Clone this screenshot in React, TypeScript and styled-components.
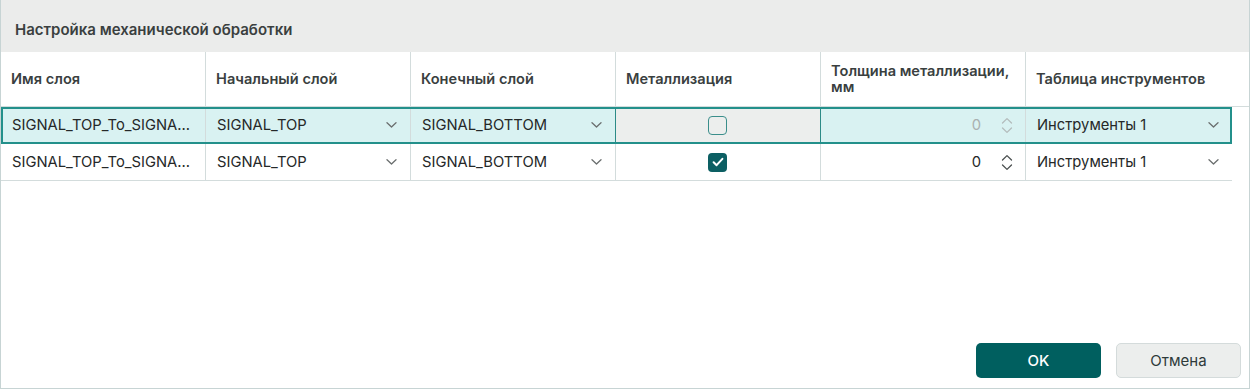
import React from 'react'
import styled, { createGlobalStyle } from 'styled-components'

const GlobalStyle = createGlobalStyle`
  html, body {
    margin: 0;
    padding: 0;
    background: #ffffff;
  }
  body {
    font-family: 'Inter', 'Noto Sans', sans-serif;
  }
`

const COLS = '205px 205px 205px 205px 205px 206px'

interface Row {
  name: string
  start: string
  end: string
  plated: boolean
  thickness: string
  tools: string
  selected?: boolean
}

const rows: Row[] = [
  {
    name: 'SIGNAL_TOP_To_SIGNAL_BOTTOM',
    start: 'SIGNAL_TOP',
    end: 'SIGNAL_BOTTOM',
    plated: false,
    thickness: '0',
    tools: 'Инструменты 1',
    selected: true,
  },
  {
    name: 'SIGNAL_TOP_To_SIGNAL_BOTTOM',
    start: 'SIGNAL_TOP',
    end: 'SIGNAL_BOTTOM',
    plated: true,
    thickness: '0',
    tools: 'Инструменты 1',
  },
]

const Chevron = () => (
  <svg width="11" height="6" viewBox="0 0 11 6" fill="none">
    <path d="M1 0.8 L5.5 5 L10 0.8" stroke="#6a6e6e" strokeWidth="1.3" strokeLinecap="round" strokeLinejoin="round" />
  </svg>
)

const Spinner: React.FC<{ muted?: boolean }> = ({ muted }) => (
  <svg width="12" height="17" viewBox="0 0 12 17" fill="none">
    <path
      d="M1.5 6 L6 1.6 L10.5 6 M1.5 11 L6 15.4 L10.5 11"
      stroke={muted ? '#b4bcbc' : '#4a4f4f'}
      strokeWidth="1.3"
      strokeLinecap="round"
      strokeLinejoin="round"
    />
  </svg>
)

const Check: React.FC<{ checked: boolean }> = ({ checked }) => (
  <CheckBox $checked={checked}>
    {checked && (
      <svg width="14" height="14" viewBox="0 0 14 14" fill="none">
        <path d="M2.6 7.3 L5.6 10.2 L11.4 3.8" stroke="#ffffff" strokeWidth="2" strokeLinecap="round" strokeLinejoin="round" />
      </svg>
    )}
  </CheckBox>
)

export default function App() {
  return (
    <>
      <GlobalStyle />
      <Dialog>
        <TitleBar>Настройка механической обработки</TitleBar>
        <TableArea>
          <HeaderRow>
            <HeadCell>Имя слоя</HeadCell>
            <HeadCell>Начальный слой</HeadCell>
            <HeadCell>Конечный слой</HeadCell>
            <HeadCell>Металлизация</HeadCell>
            <HeadCell>Толщина металлизации, мм</HeadCell>
            <HeadCell $last>Таблица инструментов</HeadCell>
          </HeaderRow>
          {rows.map((r, i) => (
            <BodyRow key={i} $selected={!!r.selected}>
              <Cell>
                <Ellipsis>{r.name}</Ellipsis>
              </Cell>
              <SelectCell>
                <Ellipsis>{r.start}</Ellipsis>
                <Chevron />
              </SelectCell>
              <SelectCell>
                <Ellipsis>{r.end}</Ellipsis>
                <Chevron />
              </SelectCell>
              <CheckCell $focused={!!r.selected}>
                <Check checked={r.plated} />
              </CheckCell>
              <NumberCell $muted={!r.plated}>
                <span>{r.thickness}</span>
                <Spinner muted={!r.plated} />
              </NumberCell>
              <SelectCell $last>
                <Ellipsis>{r.tools}</Ellipsis>
                <Chevron />
              </SelectCell>
            </BodyRow>
          ))}
        </TableArea>
        <Footer>
          <PrimaryButton>OK</PrimaryButton>
          <SecondaryButton>Отмена</SecondaryButton>
        </Footer>
      </Dialog>
    </>
  )
}

const Dialog = styled.div`
  box-sizing: border-box;
  width: 1250px;
  height: 389px;
  border: 1px solid #c7d4d4;
  border-top: none;
  display: flex;
  flex-direction: column;
  background: #ffffff;
  overflow: hidden;
`

const TitleBar = styled.div`
  box-sizing: border-box;
  height: 52px;
  padding: 20px 13px 0 14px;
  background: #ebeceb;
  color: #3a3f3f;
  font-size: 15px;
  font-weight: 600;
  line-height: 20px;
`

const TableArea = styled.div`
  flex: 1;
  display: flex;
  flex-direction: column;
`

const HeaderRow = styled.div`
  display: grid;
  grid-template-columns: ${COLS} 1fr;
  height: 55px;
  box-sizing: border-box;
  border-bottom: 1px solid #d3dcdc;
`

const HeadCell = styled.div<{ $last?: boolean }>`
  display: flex;
  align-items: center;
  padding: 0 3px 0 10px;
  border-right: ${(p) => (p.$last ? 'none' : '1px solid #d3dcdc')};
  color: #3a3f3f;
  font-size: 14.6px;
  font-weight: 600;
  line-height: 16px;
`

const BodyRow = styled.div<{ $selected: boolean }>`
  position: relative;
  display: grid;
  grid-template-columns: ${COLS};
  width: 1231px;
  height: 37px;
  box-sizing: border-box;
  border-bottom: 1px solid #d3dcdc;
  background: ${(p) => (p.$selected ? '#d9f2f2' : '#ffffff')};

  &::after {
    content: '';
    display: ${(p) => (p.$selected ? 'block' : 'none')};
    position: absolute;
    inset: 0 0 -1px 0;
    border: 2px solid #23908b;
    pointer-events: none;
  }
`

const Cell = styled.div<{ $last?: boolean }>`
  display: flex;
  align-items: center;
  min-width: 0;
  padding: 0 12px 0 11px;
  border-right: ${(p) => (p.$last ? 'none' : '1px solid #d3dcdc')};
  color: #252828;
  font-size: 14.75px;
  line-height: 18px;
`

const Ellipsis = styled.span`
  flex: 1;
  min-width: 0;
  white-space: nowrap;
  overflow: hidden;
  text-overflow: ellipsis;
`

const SelectCell = styled(Cell)`
  gap: 8px;
  padding-right: 13px;
`

const CheckCell = styled(Cell)<{ $focused: boolean }>`
  justify-content: center;
  background: ${(p) => (p.$focused ? '#eceeed' : 'transparent')};
  border-left: ${(p) => (p.$focused ? '1px solid #2c8b87' : 'none')};
  border-right: ${(p) => (p.$focused ? '1px solid #2c8b87' : '1px solid #d3dcdc')};
  margin-left: ${(p) => (p.$focused ? '-1px' : '0')};
`

const CheckBox = styled.div<{ $checked: boolean }>`
  box-sizing: border-box;
  width: 19px;
  height: 19px;
  border-radius: 4px;
  display: flex;
  align-items: center;
  justify-content: center;
  background: ${(p) => (p.$checked ? '#0c5f63' : '#ffffff00')};
  border: ${(p) => (p.$checked ? 'none' : '1.5px solid #3a8e8b')};
`

const NumberCell = styled(Cell)<{ $muted: boolean }>`
  justify-content: flex-end;
  gap: 20px;
  padding-right: 12px;
  color: ${(p) => (p.$muted ? '#a9b0b0' : '#252828')};
`

const Footer = styled.div`
  display: flex;
  justify-content: flex-end;
  gap: 15px;
  padding: 0 8px 10px 0;
`

const BaseButton = styled.button`
  box-sizing: border-box;
  width: 125px;
  height: 35px;
  border-radius: 5px;
  font-family: 'Inter', 'Noto Sans', sans-serif;
  font-size: 15px;
  cursor: pointer;
`

const PrimaryButton = styled(BaseButton)`
  background: #005f5f;
  border: none;
  color: #ffffff;
  font-weight: 500;
`

const SecondaryButton = styled(BaseButton)`
  background: #eceeed;
  border: 1px solid #d4dbdb;
  color: #2e3a3a;
  font-weight: 400;
`
